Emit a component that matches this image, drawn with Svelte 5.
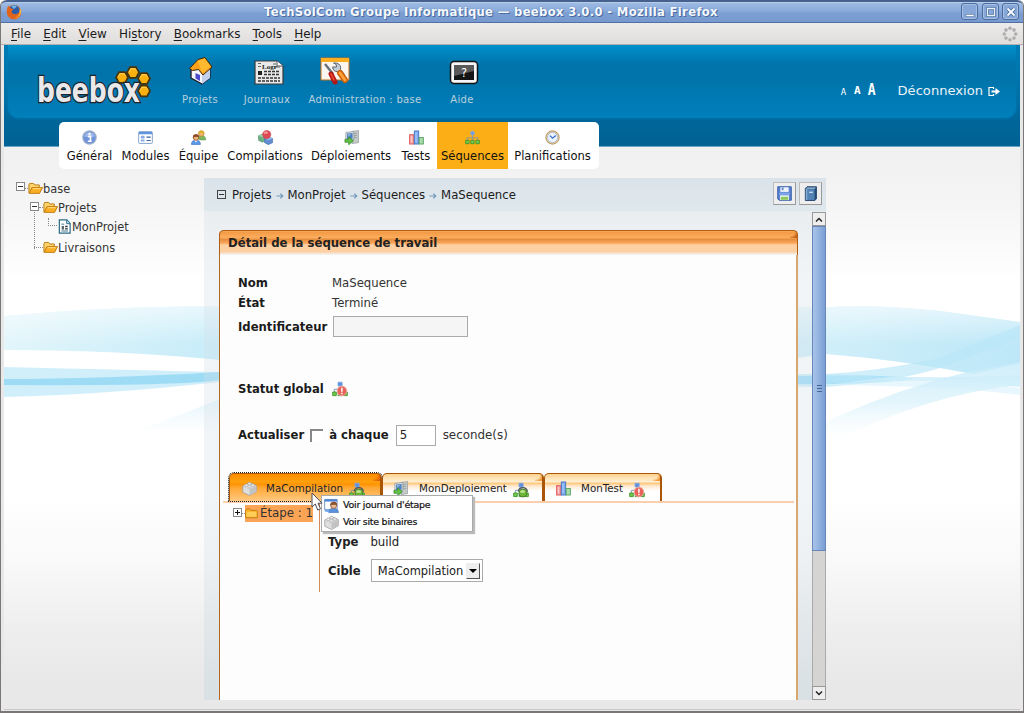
<script>
  const menus = ['File', 'Edit', 'View', 'History', 'Bookmarks', 'Tools', 'Help'];
  const accel = { File: 0, Edit: 0, View: 0, History: 2, Bookmarks: 0, Tools: 0, Help: 0 };
  const nav = [
    ['Général', 'info', 55],
    ['Modules', 'modules', 57],
    ['Équipe', 'team', 49],
    ['Compilations', 'blocks', 84],
    ['Déploiements', 'deploy', 88],
    ['Tests', 'chart', 42],
    ['Séquences', 'seq', 71],
    ['Planifications', 'clock', 89]
  ];
  const crumbs = ['Projets', 'MonProjet', 'Séquences', 'MaSequence'];
  const hexes = [[122, 77.5], [133, 72.5], [144, 78.5], [144, 91]];
  let refresh = $state(false);
  let seconds = $state('5');
</script>

{#snippet icon(name, size = 16)}
  <svg class="ico" width={size} height={size} viewBox="0 0 16 16">
    {#if name === 'info'}
      <circle cx="8" cy="8" r="7.2" fill="#6f93d6" stroke="#a9b6cf" stroke-width="1.2" />
      <path d="M2.5 7a5.6 5.6 0 0 1 11 0q-5 2-11 0" fill="#9db8e8" />
      <path d="M6.4 6.8h2.6v5h1.2M6.2 12h4" stroke="#fff" stroke-width="1.8" fill="none" />
      <circle cx="8" cy="4.1" r="1.3" fill="#fff" />
    {:else if name === 'modules'}
      <rect x="0.7" y="1.7" width="14.6" height="12.6" rx="1" fill="#fff" stroke="#7f9fcc" />
      <path d="M1 2h14v2.6H1z" fill="#5f94e0" />
      <path d="M3 6h4v3H3zM3 10.2h4v2H3z" fill="#86aee4" />
      <path d="M9 7.5h4.5M9 11.2h4.5" stroke="#3c65a5" stroke-width="1.3" />
    {:else if name === 'team'}
      <path d="M8 9q0-3 3.5-3T15.6 9v1.600H9z" fill="#7cba61" stroke="#4f8c3a" stroke-width=".5" />
      <circle cx="11" cy="3.8" r="3" fill="#edb671" stroke="#b47a1e" stroke-width=".7" />
      <path d="M7.800 3.800Q8 .4 11 .5q3.200.1 3.200 3.500Q12 2.300 7.800 3.800" fill="#e2b02c" />
      <path d="M.5 15.500q-.3-4.600 4.700-4.600t4.800 4.600z" fill="#5b98e8" stroke="#3167b8" stroke-width=".6" />
      <path d="M3.600 11l1.600 2.300L7 11z" fill="#fff" />
      <circle cx="5.3" cy="8" r="3" fill="#edb17b" stroke="#8b4a20" stroke-width=".7" />
      <path d="M2 8.200Q2 4.500 5.400 4.600q3.500 0 3.200 3.600Q6 6 2 8.200" fill="#8b4a24" />
    {:else if name === 'blocks'}
      <path d="M.5 6l4-1.500 3.500 2v5L4.500 13 .5 11z" fill="#6cb083" stroke="#4a8a63" stroke-width=".6" />
      <path d="M.5 6l4 1.500L8 6.400 4.500 4.500z" fill="#a5d6b3" />
      <path d="M7 9l4-1.800L15.500 9v4.500L11 15.600 7 13.500z" fill="#5f8fd0" stroke="#3e68a8" stroke-width=".6" />
      <path d="M7 9l4 1.600L15.500 9 11 7.200z" fill="#9fc1ee" />
      <circle cx="9.3" cy="4.8" r="4.4" fill="#df4b55" stroke="#bd3541" stroke-width=".5" />
      <ellipse cx="8.3" cy="3" rx="2.3" ry="1.3" fill="#f5959a" />
    {:else if name === 'deploy'}
      <path d="M8.500 1.500L15.500.5v13l-7 1z" fill="#c5cbc9" stroke="#8d9695" stroke-width=".7" />
      <path d="M10 4l4-.6M10 6.200l4-.5M10 8.400l4-.4" stroke="#8d9695" stroke-width=".8" />
      <path d="M2 2.500l8.500-.8v8.600L2 11z" fill="#e3e8ea" stroke="#7c8890" stroke-width=".7" />
      <path d="M3.200 3.800l6-.5v6l-6 .5z" fill="#4d80c0" />
      <path d="M4 4.500l4-.4L4 8z" fill="#8db4e2" />
      <path d="M1 9.800h4V7.300l5 4.200-5 4.200v-2.600H1z" fill="#62c048" stroke="#3a8a2c" stroke-width=".8" />
    {:else if name === 'chart'}
      <path d="M.7 5h4.600v10H.7z" fill="#f7a6a6" stroke="#e05a5a" stroke-width="1.1" />
      <path d="M5.700 1h4.600v14H5.700z" fill="#7aaaf0" stroke="#4a7bc8" stroke-width="1.1" />
      <path d="M10.900 8h4.400v7h-4.400z" fill="#aadcad" stroke="#5fa86a" stroke-width="1.1" />
      <path d="M2 6.400h1v7H2z" fill="#ffd0d0" /><path d="M7 2.300h1v11H7z" fill="#b9d4fa" />
    {:else if name === 'seq' || name === 'seq-ok' || name === 'seq-err'}
      <path d="M8 4v4.500M2.300 11V8.300h11.400V11M8 8v3" stroke="#7b93ac" stroke-width=".9" fill="none" />
      {#if name === 'seq'}
        <circle cx="8" cy="3.4" r="2.1" fill="#6b9be0" stroke="#9aabc4" />
      {:else}
        <path d="M6 1.200h4.200v3.800H6z" fill="#5d90e2" stroke="#86a9df" stroke-width=".8" />
      {/if}
      <path d="M.7 11h3.600v3.600H.7zM6.200 11h3.600v3.600H6.200zM11.700 11h3.600v3.600h-3.600z" fill="#74cc50" stroke="#3f9328" stroke-width=".9" />
      {#if name === 'seq-ok'}
        <path d="M5.200 9.600q.6-4 4.600-4t4.800 4" stroke="#4c565b" stroke-width="1.100" fill="none" />
        <circle cx="9.900" cy="11" r="4" fill="#6cb537" stroke="#477c2c" stroke-width=".9" />
        <ellipse cx="9.600" cy="9.400" rx="2.600" ry="1.500" fill="#b6e287" />
      {:else if name === 'seq-err'}
        <circle cx="9.900" cy="10" r="4.800" fill="#e8645a" stroke="#f0a79f" stroke-width=".9" />
        <path d="M9.900 6.800v3.900M9.900 11.800v1.500" stroke="#fff" stroke-width="1.500" />
      {/if}
    {:else if name === 'clock'}
      <circle cx="8" cy="8" r="6.9" fill="#f8fbff" stroke="#c6a56f" stroke-width="1.5" />
      <circle cx="8" cy="8" r="5.4" fill="#edf4fd" stroke="#9caabd" stroke-width=".8" />
      <path d="M5.300 6L8 8.700l3.600-2.900" stroke="#3b6fc4" stroke-width="1.4" fill="none" />
    {:else if name === 'brick'}
      <path d="M.8 5.500L8.500 2l6.800 3v6.500L8 15.500.8 12z" fill="#dfdfdf" stroke="#9c9c9c" stroke-width=".8" />
      <path d="M.8 5.500L8 8.700l7.300-3.700L8.500 2z" fill="#f7f7f7" stroke="#aaa" stroke-width=".5" />
      <path d="M8 8.700l7.300-3.700v6.500L8 15.500z" fill="#c3c3c3" />
      <g fill="#f0f0f0" stroke="#9e9e9e" stroke-width=".7">
        <ellipse cx="8" cy="2.8" rx="2" ry="1.3" /><ellipse cx="4.6" cy="4.6" rx="2" ry="1.3" />
        <ellipse cx="11.5" cy="4.4" rx="2" ry="1.3" /><ellipse cx="8" cy="6.2" rx="2" ry="1.3" />
      </g>
    {:else if name === 'journal'}
      <path d="M.7 1.500h13.300v11H.7z" fill="#fff" stroke="#6d93c6" />
      <path d="M.7 1.500h13.300v2.300H.7z" fill="#4b86d7" />
      <path d="M5 15.500q0-4.500 5-4.500t5.500 4.500z" fill="#5b92dc" stroke="#3066b0" stroke-width=".6" />
      <circle cx="10.300" cy="7.800" r="3.300" fill="#edbd95" stroke="#87502b" stroke-width=".8" />
      <path d="M6.700 8.200q-.2-4.200 3.900-4.100 3.900.1 3.300 4.200Q11.500 6.200 6.700 8.200" fill="#8d542f" />
      <path d="M.8 11.500l4.500.8v3l-4.500-1z" fill="#76a9e7" />
    {:else if name === 'open'}
      <path d="M1 13V3.500L2 2.600h4l1.200 1.600H12V7" fill="#ffd56b" stroke="#b8780d" />
      <path d="M1.200 13.200L4.200 7h11.300l-3.200 6.200z" fill="#fbae24" stroke="#c27c14" />
      <path d="M5 8.200h8.500" stroke="#ffe08a" />
    {:else if name === 'folder'}
      <path d="M.8 13.200V3.600L2 2.500h4.200l1.300 1.700h6.700l1 1v8z" fill="#fbb32a" stroke="#b9770c" />
      <path d="M2 6h12v6H2z" fill="#ffce57" />
    {:else if name === 'doc'}
      <path d="M2.500 1h8L14 4.800V15H2.500z" fill="#fff" stroke="#2c6b86" stroke-width="1.3" />
      <path d="M10.300 1.200V5H14" fill="#b9e0ef" stroke="#2c6b86" />
      <path d="M4.700 5.500h3M4.700 12.800h7" stroke="#356d87" />
      <path d="M5 8.500h2.500M8.500 10.500h3M5 10.500h2.400M8.800 8h2.500" stroke="#24333a" stroke-width="1.4" />
    {:else if name === 'save'}
      <path d="M.8.8h14.400v14.400H2.300L.8 13.700z" fill="#5c84cf" stroke="#2e55a4" />
      <path d="M3.600 1.300h8.800v5H3.600z" fill="#eff4fc" /><path d="M5 1.500h2v3H5z" fill="#6788c4" />
      <path d="M2.300 7h11.400v2.600H2.300z" fill="#7ca5e8" />
      <path d="M3.300 10h9.400v5H3.300z" fill="#fff" /><path d="M4 11.400h8v3.400H4z" fill="#8cc860" />
    {:else if name === 'book'}
      <path d="M2.500 2.600L4.300.8h10v13l-1.800 1.600h-10z" fill="#254b78" stroke="#23436d" />
      <path d="M4.300 1.500h9.400l-1.200 1.400H3.200z" fill="#aac8e0" />
      <path d="M3 3.300h9.300v11.600H3z" fill="#5384b5" /><path d="M3 3.300h1.500v11.600H3z" fill="#86acd0" />
      <path d="M6.500 6.700h4" stroke="#d4e3f2" stroke-width="1.3" />
    {/if}
  </svg>
{/snippet}

<div class="window">
  <div class="titlebar">
    <svg class="fox" width="16" height="16" viewBox="0 0 16 16">
      <circle cx="8" cy="8" r="7.2" fill="#e5701b" />
      <circle cx="8.2" cy="6.4" r="5.4" fill="#2e5da8" />
      <path d="M5 2q4-1.600 6 .6L8 5z" fill="#6fb4e4" />
      <path d="M.8 6Q1 2.500 3 1.600L4 4l3.500 1.200-2 2q.2 3 4 3 3.500-.3 5.300-4.200Q16 12 11.600 14.400 5 17 1.800 11.600.6 9 .8 6" fill="#e2631a" />
      <path d="M14 4q2.200 3.500-.3 7.500-2.500 3.200-5.700 2.800 5-1.300 5.400-5.300z" fill="#f8bc38" />
    </svg>
    <span class="title">TechSolCom Groupe Informatique — beebox 3.0.0 - Mozilla Firefox</span>
    <div class="winbtns">
      <span class="wb"><svg width="16" height="16" viewBox="0 0 16 16"><path d="M4 10.500h8v2H4z" fill="#fff" stroke="#476797" stroke-width=".5" /></svg></span>
      <span class="wb"><svg width="16" height="16" viewBox="0 0 16 16"><path d="M4.500 4.500h7v7h-7z" fill="none" stroke="#3f618f" stroke-width="2.4" /><path d="M4.500 4.500h7v7h-7z" fill="none" stroke="#e8f0fa" stroke-width="1.3" /></svg></span>
      <span class="wb"><svg width="16" height="16" viewBox="0 0 16 16"><path d="M4.500 4.500l7 7m0-7l-7 7" stroke="#3f618f" stroke-width="3.4" /><path d="M4.500 4.500l7 7m0-7l-7 7" stroke="#f4f8fd" stroke-width="2.1" /></svg></span>
    </div>
  </div>
  <div class="menubar">
    {#each menus as m}
      <span>{m.slice(0, accel[m])}<u>{m[accel[m]]}</u>{m.slice(accel[m] + 1)}</span>
    {/each}
    <svg class="throb" width="16" height="16" viewBox="-8 -8 16 16" fill="#adadad">
      {#each [0, 45, 90, 135, 180, 225, 270, 315] as a}
        <circle cx="0" cy="-5.7" r="1.75" transform="rotate({a})" />
      {/each}
    </svg>
  </div>

  <div class="page">
    <svg class="waves" width="1016" height="230" viewBox="4 290 1016 230">
      <defs>
        <linearGradient id="wl" x1="0" x2="1" y1="0" y2="0">
          <stop offset="0" stop-color="#e2f5fb" /><stop offset=".19" stop-color="#c9edf9" /><stop offset=".8" stop-color="#d0eff9" /><stop offset="1" stop-color="#bde7f8" />
        </linearGradient>
        <linearGradient id="wf" x1="0" x2="0" y1="0" y2="1">
          <stop offset="0" stop-color="#fff" stop-opacity=".6" /><stop offset="1" stop-color="#fff" stop-opacity="0" />
        </linearGradient>
        <linearGradient id="wd" gradientUnits="userSpaceOnUse" x1="0" x2="0" y1="362" y2="445">
          <stop offset="0" stop-color="#c6ebfa" /><stop offset=".5" stop-color="#ddf3fb" /><stop offset="1" stop-color="#fff" stop-opacity="0" />
        </linearGradient>
      </defs>
      <path d="M4 316Q100 307 190 306.500L826 307.500Q870 304 940 311L1020 322V363L973 374Q900 360 826 354L640 380 220 360Q120 350 4 350z" fill="url(#wl)" />
      <path d="M4 316Q100 307 190 306.500L826 307.500Q870 304 940 311L1020 322V345H4z" fill="url(#wf)" />
      <path d="M4 367Q130 370 220 372L826 374Q880 371 940 358L1020 325V338L940 368Q895 382 826 387L220 382Q100 395 4 397z" fill="#b9e6f8" opacity=".65" />
      <path d="M4 379Q100 379 220 372V380Q180 386 4 385z" fill="#8cd5f3" opacity=".75" />
      <path d="M798 376Q890 374 915 379 870 385 798 384z" fill="#84d4f6" opacity=".7" />
      <path d="M826 374Q940 380 1020 375V387Q930 376 826 384z" fill="#c0e8f8" opacity=".65" />
      <path d="M826 385Q950 386 1020 395V388Q940 376 890 377z" fill="#d8f1fb" opacity=".6" />
      <path d="M780 445Q900 380 1020 362V385Q930 393 826 445z" fill="url(#wd)" opacity=".8" />
      <path d="M140 430Q190 411 220 399V430z" fill="url(#wd)" opacity=".7" />
    </svg>

    <header>
      <div class="glow">
        <svg class="logo" width="130" height="46" viewBox="28 63 130 46">
          {#each hexes as [x, y]}
            <path d="M{x - 6} {y}l3-5.300h6l3 5.300-3 5.300h-6z" fill="#f9b010" stroke="#493309" stroke-width="1.700" />
            <path d="M{x - 4} {y - .5}l2-3.200h4l2 2.500" fill="none" stroke="#ffd25a" stroke-width="1" />
          {/each}
          <text x="37" y="101.500" textLength="103" lengthAdjust="spacingAndGlyphs" class="logotext">beebox</text>
        </svg>
        <div class="tops">
          <div class="top" style="width:66px">
            <svg width="30" height="32" viewBox="0 0 30 32" style="position:relative;left:1px">
              <path d="M5 14v9l11 6 8-6V12z" fill="#f5f7fd" stroke="#22252f" stroke-width="1.4" />
              <path d="M16 18v11l8-6V12z" fill="#c3d0ec" />
              <path d="M9.500 18l4.500 2v6l-4.500-2.500z" fill="#4c4bd0" />
              <path d="M3.500 13.500L12 4.500l7-2 7 9.500-9 8-4.500-5.500-6 1z" fill="#fba21c" stroke="#402406" stroke-width="1" />
              <path d="M11.500 6l7-2.500 6 8-8 6.500z" fill="#ffb92f" />
            </svg>
            <span>Projets</span>
          </div>
          <div class="top" style="width:68px">
            <svg width="30" height="32" viewBox="0 0 30 32" style="position:relative;left:2px;top:1px">
              <path d="M1 5h22l6 5v18H1z" fill="#e9e9e9" stroke="#3a3a3a" stroke-width="1.2" />
              <path d="M23 5v5h6" fill="#fff" stroke="#555" />
              <path d="M4 7.500h3M4 10.500h3M19 8h3M20 11h6" stroke="#666" />
              <text x="8" y="13" font-size="7" font-weight="bold" font-family="Liberation Serif" fill="#222">Logr</text>
              <path d="M4 15h4v4H4z" fill="#222" />
              <path d="M10 15.500h16M10 18.500h16M4 22h22M4 25h22" stroke="#333" stroke-width="1.4" stroke-dasharray="3 1" />
            </svg>
            <span>Journaux</span>
          </div>
          <div class="top" style="width:128px">
            <svg class="adm" width="34" height="32" viewBox="0 0 34 32">
              <path d="M3 3h28v22H3z" fill="#faf5ef" stroke="#c26d1c" />
              <path d="M3 3h28v4H3z" fill="#fbae20" />
              <path d="M7 9l8 10" stroke="#68727e" stroke-width="2.4" />
              <path d="M13 19l4 8" stroke="#b71414" stroke-width="5" stroke-linecap="round" />
              <path d="M13 19l3 6" stroke="#f05036" stroke-width="1.600" stroke-linecap="round" />
              <path d="M15.500 8q4 1 3 4l-4 0q1 5 5 4.500l4 5 3-2-4-5q1-5-4-6.500z" fill="#c5ced8" stroke="#596572" />
              <path d="M22 18l5 7" stroke="#ce6308" stroke-width="6" stroke-linecap="round" />
              <path d="M22 18l5 7" stroke="#ff9f39" stroke-width="3" stroke-linecap="round" />
            </svg>
            <span>Administration : base</span>
          </div>
          <div class="top" style="width:68px">
            <svg width="30" height="32" viewBox="0 0 30 32" style="position:relative;left:1px;top:1px">
              <rect x="1.500" y="5.500" width="27" height="22" rx="3.500" fill="#f6f6f6" stroke="#131313" stroke-width="1.500" />
              <path d="M5 9h20v15H5z" fill="#151515" /><path d="M5 9h20v6L5 20z" fill="#595959" />
              <text x="15" y="20.500" text-anchor="middle" font-size="11.500" font-family="DejaVu Sans" fill="#fff">?</text>
            </svg>
            <span class="aide">Aide</span>
          </div>
        </div>
        <div class="right">
          <span class="a1">A</span><span class="a2">A</span><span class="a3">A</span>
          <span class="logout">Déconnexion</span>
          <svg width="12" height="11" viewBox="0 0 12 11"><path d="M5.500 1.500H1v8h4.500M5.500 1v2M5.500 8v2" fill="none" stroke="#fff" stroke-width="1.200" /><path d="M3.500 4.500h4V2L12 5.500 7.500 9V6.500h-4z" fill="#fff" /></svg>
        </div>
      </div>
    </header>

    <nav>
      {#each nav as [label, ic, w]}
        <div class="navitem" class:active={label === 'Séquences'} style="width:{w}px">
          {@render icon(ic, 15)}
          <span>{label}</span>
        </div>
      {/each}
    </nav>

    <div class="content">
      <aside>
        <div class="node r1"><i class="pm"></i><i class="dots"></i>{@render icon('open', 15)}<span>base</span></div>
        <div class="kids">
          <div class="node r2"><i class="pm"></i><i class="dots"></i>{@render icon('open', 15)}<span>Projets</span></div>
          <div class="node r3"><i class="elbow"></i>{@render icon('doc', 15)}<span>MonProjet</span></div>
          <div class="node r4"><i class="dots long"></i>{@render icon('open', 15)}<span>Livraisons</span></div>
        </div>
      </aside>

      <main>
        <div class="crumbs">
          <i class="box"></i>
          {#each crumbs as c, i}
            {#if i}<svg class="arr" width="8" height="8" viewBox="0 0 8 8"><path d="M.5 4h6M4.300 1.600L6.800 4 4.300 6.400" fill="none" stroke="#7398bb" stroke-width="1.200" /></svg>{/if}
            <span>{c}</span>
          {/each}
          <div class="tools">
            <button aria-label="Enregistrer">{@render icon('save', 15)}</button>
            <button aria-label="Aide">{@render icon('book', 15)}</button>
          </div>
        </div>

        <div class="scroller">
          <section>
            <h1>Détail de la séquence de travail</h1>
            <div class="form">
              <div class="row nom"><b>Nom</b><span>MaSequence</span></div>
              <div class="row"><b>État</b><span>Terminé</span></div>
              <div class="row ident"><b>Identificateur</b><div class="field"></div></div>
              <div class="row statut"><b>Statut global</b>{@render icon('seq-err', 16)}</div>
              <div class="row act">
                <b>Actualiser</b>
                <button class="check" aria-label="Actualiser" onclick={() => (refresh = !refresh)}>{refresh ? '✓' : ''}</button>
                <b>à chaque</b>
                <input bind:value={seconds} aria-label="Secondes" />
                <span>seconde(s)</span>
              </div>
            </div>

            <div class="tabs">
              <div class="tab on">{@render icon('brick', 15)}<span>MaCompilation</span>{@render icon('seq-ok', 16)}</div>
              <div class="tab t2">{@render icon('deploy', 15)}<span>MonDeploiement</span>{@render icon('seq-ok', 16)}</div>
              <div class="tab t3">{@render icon('chart', 15)}<span>MonTest</span>{@render icon('seq-err', 16)}</div>
            </div>
            <div class="step">
              <div class="steptree">
                <i class="pm plus"></i><i class="dots"></i>
                <div class="sel">{@render icon('folder', 13)}<span>Étape : 1</span></div>
              </div>
              <div class="detail">
                <div class="drow"><b>Type</b><span>build</span></div>
                <div class="drow cible"><b>Cible</b><div class="select"><span>MaCompilation</span><i><svg width="8" height="4" viewBox="0 0 8 4"><path d="M0 0h8L4 4z" /></svg></i></div></div>
                <div class="popup">
                  <div>{@render icon('journal', 15)}<span>Voir journal d'étape</span></div>
                  <div>{@render icon('brick', 15)}<span>Voir site binaires</span></div>
                </div>
                <svg class="cursor" width="13" height="19" viewBox="0 0 13 19"><path d="M1 1v14l3.300-3 2.400 6 2.800-1.200-2.500-5.600H11z" fill="#fff" stroke="#4a4a58" stroke-width="1" /></svg>
              </div>
            </div>
          </section>
          <div class="scrollbar">
            <i class="sb"><svg width="8" height="5" viewBox="0 0 8 5"><path d="M1 4.500l3-3 3 3" fill="none" stroke="#222" stroke-width="1.500" /></svg></i>
            <div class="thumb"><i></i><i></i><i></i></div>
            <div class="track"></div>
            <i class="sb"><svg width="8" height="5" viewBox="0 0 8 5"><path d="M1 .500l3 3 3-3" fill="none" stroke="#222" stroke-width="1.500" /></svg></i>
          </div>
        </div>
      </main>
    </div>
  </div>
</div>

<style>
  :global(body) { margin: 0; background: #fff; }
  * { box-sizing: border-box; }
  svg { display: block; flex: none; overflow: visible; }
  .window {
    width: 1024px; height: 713px; overflow: hidden; display: flex; flex-direction: column;
    font: 11.7px "DejaVu Sans", sans-serif; color: #1c1c1c; white-space: nowrap;
    background: #e9e8e8; border-right: 1px solid #7b7776; border-left: 1px solid #7b7776; border-bottom: 2px solid #7b7776;
    border-radius: 6px 6px 0 0;
  }
  .titlebar {
    height: 23px; flex: none; display: flex; align-items: center; padding: 0 4px 1px 5px;
    background: linear-gradient(#a0bce3, #89aadb 45%, #7c9fd1 55%, #7899cf);
    border-top: 2px solid #46618d; border-bottom: 1px solid #4e70a2; border-radius: 6px 6px 0 0;
    box-shadow: inset 0 1px #b6cceb;
  }
  .title {
    flex: 1; text-align: center; color: #f5f8fd; font-weight: bold; font-size: 11.600px; letter-spacing: .34px;
    text-shadow: 1px 1px #496b9d, 0 0 1px #5577aa; padding-right: 1px;
  }
  .winbtns { display: flex; gap: 3.500px; }
  .wb { width: 17px; height: 17px; border: 1px solid #4a6c9f; border-radius: 3px; box-shadow: inset 0 0 0 1px #a6bfe2; background: #86a7d7; display: grid; place-items: center; }
  .menubar {
    height: 22px; flex: none; display: flex; align-items: center; gap: 12.200px; padding: 0 5px 0 10px;
    font-size: 11.950px; background: linear-gradient(#edebeb, #dfdedc); border-bottom: 1px solid #b4b0ae;
  }
  .menubar u { text-underline-offset: 2px; }
  .throb { margin-left: auto; }
  .page {
    position: relative; flex: 1; margin: 0 3px 2px; display: flex; flex-direction: column; overflow: hidden;
    background: linear-gradient(#f0f0f0 0, #f0f0f0 102px, #f5f5f5 160px, #fff 235px, #fff 450px, #f9f9f9 515px, #eeeeee 585px, #e8e8e8 640px);
    box-shadow: 0 1px #cbc9c8;
  }
  .waves { position: absolute; left: 0; top: 245px; }
  header {
    position: relative; height: 102px; flex: none; padding: 0 4px;
    background: linear-gradient(#007db7, #006da2 60%, #00669a 75%, #006294); border-bottom: 1px solid #65a5c8;
  }
  .glow {
    height: 73px; border-radius: 0 0 10px 10px; display: flex;
    background: linear-gradient(#0092cc, #0081bc 10px, #0074aa 20px, #0074ab 34px, #007fbb);
    box-shadow: 0 0 3px #0079b2;
  }
  .logo { margin: 18px 0 0 20px; }
  .logotext { font: bold 33px "DejaVu Sans", sans-serif; fill: #e9e9eb; stroke: #20242a; stroke-width: 2.600; paint-order: stroke; }
  .tops { display: flex; margin-left: 9px; }
  .top { display: flex; flex-direction: column; align-items: center; padding-top: 10px; }
  .top span { color: #b9d0dd; font-size: 10px; letter-spacing: .3px; line-height: 13px; margin-top: 6px; }
  .top .aide { margin-right: 2px; }
  .adm { position: relative; left: -30px; }
  .right { margin-left: auto; display: flex; align-items: center; color: #fff; padding: 19px 16px 0 0; }
  .right span { line-height: 16px; }
  .a1, .a2, .a3 { font: bold 8px "DejaVu Sans Mono", monospace; align-self: center; position: relative; }
  .a1 { font-weight: normal; top: 1px; margin-right: 8px; font-size: 9px; }
  .a2 { font-size: 11px; margin-right: 7px; }
  .a3 { font-size: 13px; margin-right: 22px; top: -1px; transform: scaleY(1.150); }
  .logout { font-size: 13.100px; color: #e8f4fa; margin-right: 5px; }
  nav {
    position: relative; flex: none; display: flex; width: 540px; height: 47px; margin: -25px 0 0 55px; padding-left: 3px;
    background: #fff; border-radius: 5px;
  }
  .navitem { display: flex; flex-direction: column; align-items: center; padding-top: 8px; font-size: 11.550px; color: #111; }
  .navitem span { line-height: 16px; margin-top: 3px; }
  .active { background: #fcae17; }
  .content { position: relative; flex: 1; display: flex; min-height: 0; padding-top: 9px; }
  aside { width: 200px; padding: 1px 0 0 12px; color: #333; font-size: 11.400px; }
  .node { display: flex; align-items: center; height: 19px; }
  .kids { padding-left: 14px; position: relative; }
  .kids::before { content: ''; position: absolute; left: 18px; top: 14px; height: 37px; border-left: 1px dotted #888; }
  .pm { width: 9px; height: 9px; flex: none; border: 1px solid #888; background: linear-gradient(#333, #333) center/5px 1px no-repeat #fff; position: relative; top: -1px; }
  .r1 .pm { top: -2px; }
  .plus { background: linear-gradient(#111, #111) center/5px 1px no-repeat, linear-gradient(#111, #111) center/1px 5px no-repeat, #fff; }
  .dots { width: 3px; border-top: 1px dotted #888; flex: none; }
  .dots.long { width: 9px; margin-left: 3px; }
  .r2 .dots { width: 4px; }
  .r4 .dots { margin-left: 4px; }
  .r3 { padding-left: 18px; }
  .elbow { width: 9px; height: 8px; border: dotted #888; border-width: 0 0 1px 1px; margin-top: -9px; }
  .r4 { margin-top: 2px; }
  main { width: 622px; height: 522px; display: flex; flex-direction: column; background: linear-gradient(rgba(206, 219, 228, .3) 34px, rgba(216, 225, 232, .34) 380px, rgba(205, 219, 225, .55)); }
  .crumbs { height: 34px; flex: none; display: flex; align-items: center; padding: 0 4px 0 13px; background: linear-gradient(#dbe3ea, #dfe8ed); font-size: 11.700px; letter-spacing: -.02px; border-bottom: 1px solid #e7edf1; color: #1c1c1c; }
  .box { width: 9px; height: 9px; margin-right: 6px; border: 1px solid #444; background: linear-gradient(#333, #333) center/5px 1px no-repeat; }
  .arr { margin: 0 4px; position: relative; top: 1px; }
  .tools { margin-left: auto; display: flex; gap: 3px; margin-top: -2px; }
  .tools button { width: 23px; height: 23px; padding: 0; display: grid; place-items: center; background: #eee; border: 1px solid #bbb; border-right-color: #999; border-bottom-color: #999; }
  .scroller { flex: 1; display: flex; min-height: 0; }
  section { margin: 18px 14px 0 15px; width: 579px; background: #fdfdfd; border: 1px solid #b2661f; border-right: 2px solid #d9a66c; border-bottom: 0; border-top: 0; border-radius: 5px 5px 0 0; }
  h1 { position: relative; margin: 0 -2px 0 -1px; height: 25px; padding: 1px 0 0 8px; font-size: 11.700px; line-height: 22px; border: 1px solid #b05f14; border-bottom: 0; border-radius: 5px 5px 0 0; color: #222;
    background: linear-gradient(#f9b264 0, #f39a45 1px, #fcae5e 7px, #e38c3c 8px, #fba65a 12px, #fdd1a4 14px, #fdd0a3 21px, #f4f0ee 23px); }
  h1::after, .tab::after { content: ''; position: absolute; right: 0; top: 0; width: 7px; height: 7px; background: radial-gradient(circle at 0 0, transparent 5px, #c4651a 8px); }
  .form { padding: 18px 0 0 18px; }
  b { font-size: 11.650px; }
  .row { display: flex; align-items: center; height: 19px; color: #333; }
  .row b { color: #1b1b1b; }
  .nom b, .nom + .row b { width: 94px; }
  .nom { height: 20px; }
  .ident { height: 28px; }
  .ident b { width: 95px; padding-top: 1px; }
  .field { width: 135px; height: 21px; background: #f5f5f5; border: 1px solid #aaa; }
  .statut { margin-top: 39px; height: 20px; gap: 8px; }
  .act { margin-top: 25px; height: 22px; }
  .check { width: 13px; height: 13px; margin: 0 6px; padding: 0; background: #fff; border: 0; border-top: 2px solid #888; border-left: 2px solid #888; font-size: 9px; line-height: 9px; }
  input { width: 40px; height: 21px; padding: 0 3px; margin: 0 7px 0 7px; border: 1px solid #aaa; font: 11.700px "DejaVu Sans", sans-serif; color: #222; background: #fff; }
  .act span { font-size: 11.900px; }
  .tabs { display: flex; height: 31px; margin: 26px 2px 0 3px; padding: 1px 0 0 6px; border-bottom: 2px solid #fbcfae; }
  .tab { position: relative; display: flex; align-items: center; height: 28px; border: solid #aa5608; border-width: 1px 2px 0 1px; border-radius: 5px 5px 0 0; font-size: 10.300px; color: #222; background: linear-gradient(#ffd390, #fff0d6 8px, #ffc575 9px, #ffe9cf 12px, #fff 17px); }
  .tab::after { background: radial-gradient(circle at 0 0, transparent 5px, #f29a3a 8px); }
  .tab :global(svg) { position: relative; top: 1px; }
  .tab :global(svg:last-child) { top: 2px; }
  .on { width: 153px; padding-left: 12px; background: linear-gradient(#ff8c00, #ffa20d 8px, #ff9200 10px, #ffa938 14px, #ffcb86 28px); outline: 1px dotted #222; }
  .on::after { background: radial-gradient(circle at 0 0, transparent 4px, #e05a00 9px); }
  .on span { margin: 0 6px 0 9px; }
  .t2 { width: 162px; padding-left: 10px; }
  .t2 span { margin: 0 6px 0 11px; }
  .t3 { width: 118px; padding-left: 11px; }
  .t3 span { margin: 0 6px 0 10px; }
  .step { display: flex; padding-left: 13px; }
  .steptree { width: 86px; height: 20px; display: flex; align-items: center; }
  .sel { height: 17px; width: 68px; display: flex; align-items: center; gap: 2px; background: #fba455; color: #333; font-size: 11.800px; }
  .detail { position: relative; height: 89px; width: 300px; border-left: 1px solid #d78b57; padding: 30px 0 0 8px; color: #222; }
  .drow { display: flex; align-items: center; height: 18px; gap: 12px; }
  .cible { margin-top: 8px; height: 23px; gap: 10px; }
  .select { display: flex; justify-content: space-between; align-items: center; width: 112px; height: 23px; padding: 0 2px 0 6px; border: 1px solid #aaa; background: #fff; font-size: 11.450px; }
  .select i { width: 14px; height: 16px; background: #eee; border: 1px solid #eee; border-right-color: #555; border-bottom-color: #555; display: grid; place-items: center; }
  .popup { position: absolute; left: 1px; top: -8px; width: 152px; height: 37px; padding: 0 0 0 2px; background: #fff; border: 1px solid #aaa; box-shadow: 2px 2px 1px #bbb; }
  .popup div { display: flex; align-items: center; gap: 4px; height: 17px; font-size: 9.500px; letter-spacing: -.27px; color: #111; -webkit-text-stroke: .2px #111; }
  .popup div :global(svg) { position: relative; top: 1px; }
  .popup div span { margin-top: -1px; }
  .cursor { position: absolute; left: -9px; top: -11px; }
  .scrollbar { width: 14px; display: flex; flex-direction: column; }
  .sb { height: 14px; flex: none; display: grid; place-items: center; background: #eee; border: 1px solid #999; }
  .thumb { height: 325px; flex: none; display: flex; flex-direction: column; justify-content: center; align-items: center; gap: 2px; border: 1px solid #6687b8; background: linear-gradient(90deg, #a9c4ea, #7a9fd5); }
  .thumb i { width: 5px; height: 1px; background: #466791; }
  .track { flex: 1; background: #d5d4d2; border: solid #aaa; border-width: 0 1px; }
</style>
